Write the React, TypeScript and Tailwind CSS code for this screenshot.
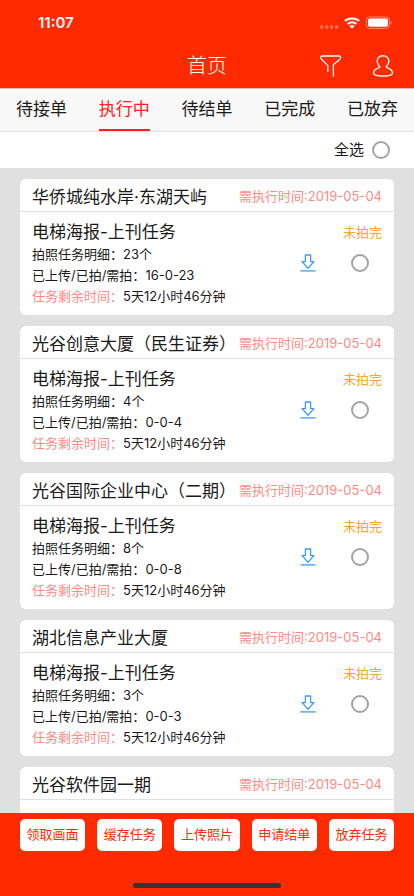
import { useState } from 'react';

const tabs = ['待接单', '执行中', '待结单', '已完成', '已放弃'];

const actions = ['领取画面', '缓存任务', '上传照片', '申请结单', '放弃任务'];

type Task = {
  id: number;
  name: string;
  date: string;
  detail?: { count: number; progress: string };
};

const tasks: Task[] = [
  { id: 1, name: '华侨城纯水岸·东湖天屿', date: '2019-05-04', detail: { count: 23, progress: '16-0-23' } },
  { id: 2, name: '光谷创意大厦（民生证券）', date: '2019-05-04', detail: { count: 4, progress: '0-0-4' } },
  { id: 3, name: '光谷国际企业中心（二期）', date: '2019-05-04', detail: { count: 8, progress: '0-0-8' } },
  { id: 4, name: '湖北信息产业大厦', date: '2019-05-04', detail: { count: 3, progress: '0-0-3' } },
  { id: 5, name: '光谷软件园一期', date: '2019-05-04' },
];

const radioClass =
  'block size-[18px] shrink-0 appearance-none rounded-full border-2 border-[#a3a3a3] bg-white checked:border-[5px] checked:border-[#ff2a00]';

function StatusBar() {
  return (
    <div className="flex h-11 items-center justify-between pt-[2px] pr-[22px] pl-[38px]">
      <span className="text-[15px] font-semibold">11:07</span>
      <svg width="74" height="14" viewBox="0 0 74 14" fill="#fff">
        <g opacity="0.3">
          <rect x="2" y="9" width="3.4" height="4" rx="1.5" />
          <rect x="7" y="9" width="3.4" height="4" rx="1.5" />
          <rect x="12" y="9" width="3.4" height="4" rx="1.5" />
          <rect x="17" y="9" width="3.4" height="4" rx="1.5" />
        </g>
        <g fill="none" stroke="#fff" strokeWidth="2.2">
          <path d="M26.9 4.9a11.2 11.2 0 0 1 14.2 0" />
          <path d="M29.6 8a7 7 0 0 1 8.8 0" />
        </g>
        <path d="M31.4 10.1a4.2 4.2 0 0 1 5.2 0L34 12.8z" />
        <rect x="48.5" y="1" width="23" height="11.4" rx="3.2" fill="none" stroke="#fff" opacity="0.45" />
        <rect x="50" y="2.6" width="20" height="8.2" rx="1.8" />
        <path d="M72.6 4.8c1.2.4 1.2 3.4 0 3.8z" opacity="0.5" />
      </svg>
    </div>
  );
}

function DownloadIcon() {
  return (
    <svg width="16" height="18" viewBox="0 0 16 18" fill="none" stroke="#3d9cf5" strokeWidth="1.3" strokeLinejoin="round">
      <path d="M5.4 1h5.2v6.6h3.3L8 14.2 2.1 7.6h3.3z" />
      <path d="M.4 16.9h15.2" />
    </svg>
  );
}

export default function App() {
  const [activeTab, setActiveTab] = useState('执行中');
  const [selected, setSelected] = useState<number[]>([]);

  const allSelected = selected.length === tasks.length;

  const toggle = (id: number) => {
    setSelected(selected.includes(id) ? selected.filter((s) => s !== id) : [...selected, id]);
  };

  return (
    <div className="flex h-screen flex-col bg-[#e0e0e0] font-[Inter,'Noto_Sans_CJK_SC',sans-serif] text-[#1a1a1a]">
      <header className="shrink-0 bg-[#ff2a00] text-white">
        <StatusBar />
        <div className="grid h-11 grid-cols-3 items-center px-5">
          <h1 className="col-start-2 text-center text-xl leading-7 font-light">首页</h1>
          <div className="flex items-center justify-end gap-[30px]">
            <button type="button" aria-label="筛选">
              <svg width="23" height="24" viewBox="0 0 23 24" fill="none" stroke="#fff" strokeWidth="1.3" strokeLinecap="round" strokeLinejoin="round">
                <path d="M8.8 17.6v-6.2L2.4 5.2C1.2 3.8 1.6 2 3.2 2h16.9c1.6 0 2 1.8.8 3.2l-6.5 5.6v11.4" />
              </svg>
            </button>
            <button type="button" aria-label="我的">
              <svg width="22" height="24" viewBox="0 0 22 24" fill="none" stroke="#fff" strokeWidth="1.4" strokeLinejoin="round">
                <path d="M11 1.8c-3.4 0-5.8 2.3-5.8 5.5 0 2 .9 3.6 2.2 4.9.5.6.3 1.1-.3 1.4C3.8 14.8 1.5 16.6 1.5 19c0 2.5 4.4 3 9.5 3s9.5-.5 9.5-3c0-2.4-2.3-4.2-5.6-5.4-.6-.3-.8-.8-.3-1.4 1.3-1.3 2.2-2.9 2.2-4.9 0-3.2-2.4-5.5-5.8-5.5z" />
              </svg>
            </button>
          </div>
        </div>
      </header>

      <nav className="grid h-11 shrink-0 grid-cols-5 border-t border-b border-t-[#e8b8b0] border-b-[#e2e2e2] bg-[#f8f8f8]">
        {tabs.map((tab) => (
          <button
            key={tab}
            type="button"
            onClick={() => setActiveTab(tab)}
            className="flex justify-center text-[17px]"
          >
            <span
              className={`h-full border-b-2 leading-10 ${
                activeTab === tab ? 'border-[#ff2020] text-[#ff2020]' : 'border-transparent'
              }`}
            >
              {tab}
            </span>
          </button>
        ))}
      </nav>

      <div className="flex h-9 shrink-0 items-center justify-end bg-white pr-6">
        <label className="flex items-center gap-2 text-[15px]">
          全选
          <input
            type="checkbox"
            className={radioClass}
            checked={allSelected}
            onChange={() => setSelected(allSelected ? [] : tasks.map((t) => t.id))}
          />
        </label>
      </div>

      <main className="flex min-h-0 flex-1 flex-col gap-[11px] overflow-hidden px-5 pt-[11px]">
        {tasks.map((task) => (
          <article key={task.id} className="min-h-[136px] shrink-0 rounded-md bg-white">
            <div className="flex items-center justify-between border-b border-[#e0e0e0] px-3 pt-1 whitespace-nowrap">
              <h2 className="text-[17px] leading-7">{task.name}</h2>
              <span className="text-[13px] text-[#ff8a84]">需执行时间:{task.date}</span>
            </div>
            {task.detail && (
              <div className="flex justify-between px-3 py-2">
                <div className="text-[13px] leading-[21px]">
                  <h3 className="text-[17px] leading-6">电梯海报-上刊任务</h3>
                  <p>拍照任务明细：{task.detail.count}个</p>
                  <p>已上传/已拍/需拍：{task.detail.progress}</p>
                  <p>
                    <span className="text-[#ff8a84]">任务剩余时间：</span>5天12小时46分钟
                  </p>
                </div>
                <div className="flex flex-col items-end gap-[10px]">
                  <span className="text-[13px] leading-6 text-[#f5a623]">未拍完</span>
                  <div className="flex items-center gap-[35px] pr-[13px]">
                    <button type="button" aria-label={`下载${task.name}`}>
                      <DownloadIcon />
                    </button>
                    <input
                      type="checkbox"
                      aria-label={`选择${task.name}`}
                      className={radioClass}
                      checked={selected.includes(task.id)}
                      onChange={() => toggle(task.id)}
                    />
                  </div>
                </div>
              </div>
            )}
          </article>
        ))}
      </main>

      <footer className="shrink-0 bg-[#ff2a00]">
        <div className="grid grid-cols-5 gap-3 px-5 pt-[6px]">
          {actions.map((action) => (
            <button
              key={action}
              type="button"
              className="h-8 rounded-[5px] bg-white text-[13px] whitespace-nowrap text-[#ff2a00]"
            >
              {action}
            </button>
          ))}
        </div>
        <div className="flex justify-center pt-8 pb-2">
          <div className="h-[5px] w-[148px] rounded-full bg-[#3a3333]" />
        </div>
      </footer>
    </div>
  );
}
